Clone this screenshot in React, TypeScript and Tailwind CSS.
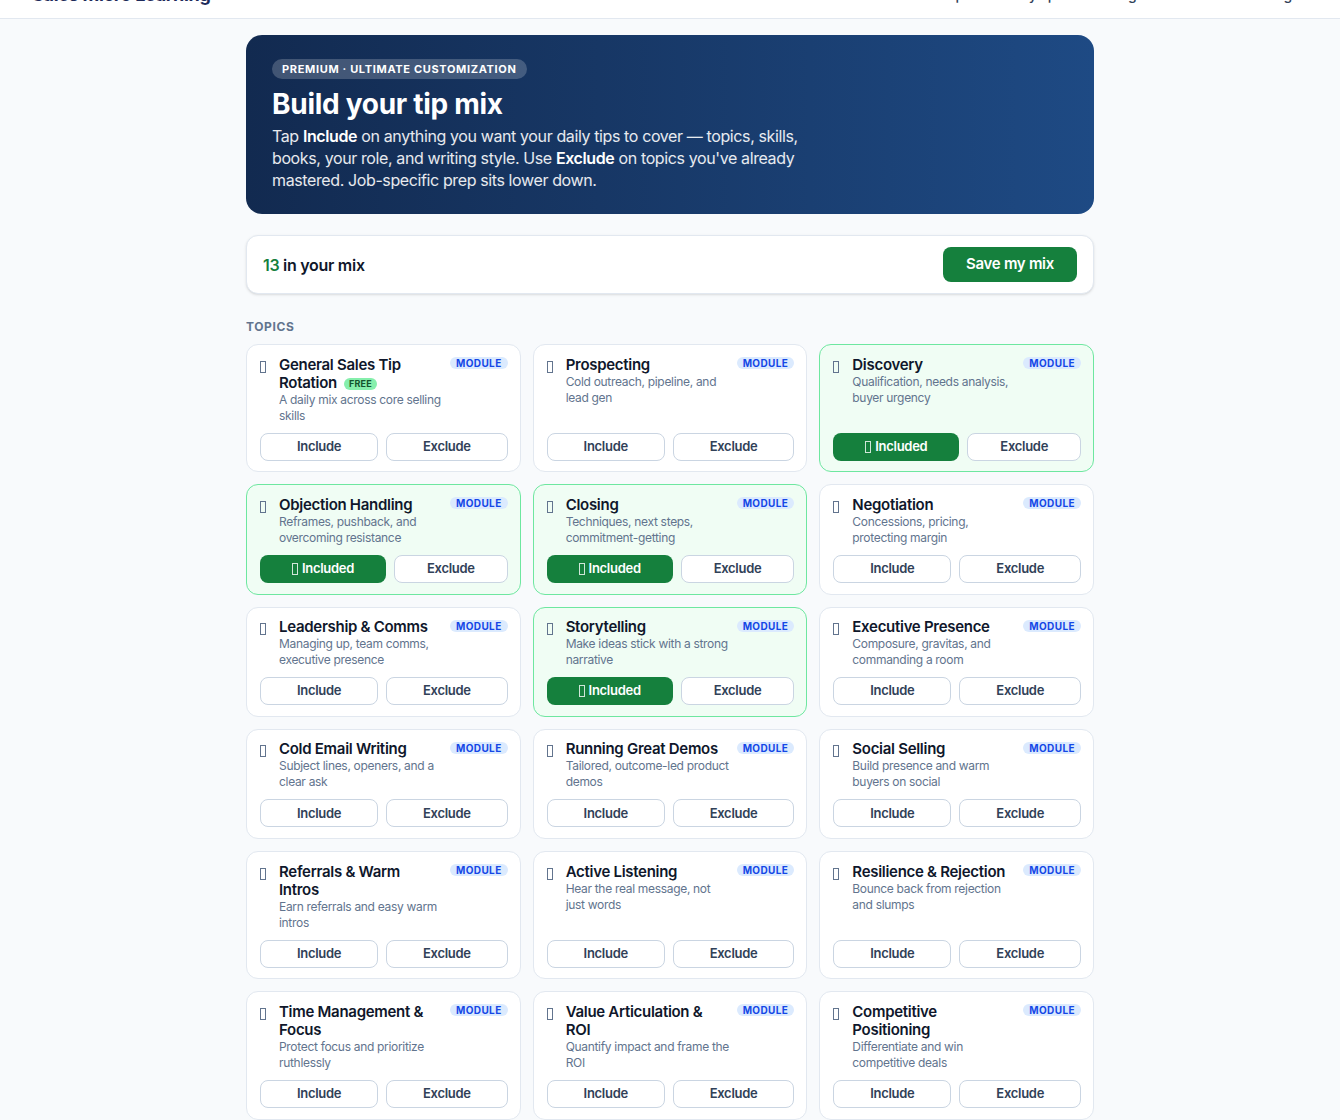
import React, { useState } from "react";

type Topic = {
  id: string;
  title: string;
  desc: string;
  free?: boolean;
};

const TOPICS: Topic[] = [
  { id: "general", title: "General Sales Tip Rotation", desc: "A daily mix across core selling skills", free: true },
  { id: "prospecting", title: "Prospecting", desc: "Cold outreach, pipeline, and lead gen" },
  { id: "discovery", title: "Discovery", desc: "Qualification, needs analysis, buyer urgency" },
  { id: "objections", title: "Objection Handling", desc: "Reframes, pushback, and overcoming resistance" },
  { id: "closing", title: "Closing", desc: "Techniques, next steps, commitment-getting" },
  { id: "negotiation", title: "Negotiation", desc: "Concessions, pricing, protecting margin" },
  { id: "leadership", title: "Leadership & Comms", desc: "Managing up, team comms, executive presence" },
  { id: "storytelling", title: "Storytelling", desc: "Make ideas stick with a strong narrative" },
  { id: "presence", title: "Executive Presence", desc: "Composure, gravitas, and commanding a room" },
  { id: "coldemail", title: "Cold Email Writing", desc: "Subject lines, openers, and a clear ask" },
  { id: "demos", title: "Running Great Demos", desc: "Tailored, outcome-led product demos" },
  { id: "social", title: "Social Selling", desc: "Build presence and warm buyers on social" },
  { id: "referrals", title: "Referrals & Warm Intros", desc: "Earn referrals and easy warm intros" },
  { id: "listening", title: "Active Listening", desc: "Hear the real message, not just words" },
  { id: "resilience", title: "Resilience & Rejection", desc: "Bounce back from rejection and slumps" },
  { id: "time", title: "Time Management & Focus", desc: "Protect focus and prioritize ruthlessly" },
  { id: "roi", title: "Value Articulation & ROI", desc: "Quantify impact and frame the ROI" },
  { id: "competitive", title: "Competitive Positioning", desc: "Differentiate and win competitive deals" },
];

// missing-glyph box, the emoji font isn't there
const Tofu = ({ light }: { light?: boolean }) => (
  <span
    className={`block w-[6px] h-[12px] border ${light ? "border-white/80" : "border-slate-500"}`}
  />
);

const TopicCard = ({
  topic,
  included,
  onToggle,
}: {
  topic: Topic;
  included: boolean;
  onToggle: () => void;
}) => (
  <div
    className={`flex flex-col rounded-xl border pl-[13px] pr-[12px] pt-[10.5px] pb-[10.75px] ${
      included ? "bg-[#f0fdf4] border-[#6ee7a0]" : "bg-white border-slate-200"
    }`}
  >
    <div className="flex items-start">
      <div className="w-[11px] shrink-0 pt-[5px] mr-2">
        <Tofu />
      </div>
      <div className="flex-1 min-w-0 mr-[5px]">
        <h3 className="pr-1 text-[15px] leading-[18px] font-semibold text-slate-900">
          {topic.title}
          {topic.free && (
            <span className="ml-[7px] inline-block align-[1px] rounded-full bg-[#86efac] px-[5px] text-[9px] leading-[12px] font-bold tracking-wide text-[#14532d]">
              FREE
            </span>
          )}
        </h3>
        <p className="text-[12px] leading-[16px] tracking-[-0.026em] text-slate-500">{topic.desc}</p>
      </div>
      <span className="shrink-0 mt-[1.5px] rounded-full bg-blue-100 px-1.5 text-[10px] leading-[12px] font-bold tracking-[0.04em] text-blue-700">
        MODULE
      </span>
    </div>
    <div className="mt-auto flex gap-2 pt-[9px]">
      {included ? (
        <button
          onClick={onToggle}
          className="flex-auto h-7 rounded-lg bg-[#15803d] text-white text-[13px] font-semibold flex items-center justify-center gap-1"
        >
          <Tofu light />
          Included
        </button>
      ) : (
        <button
          onClick={onToggle}
          className="flex-auto h-7 rounded-lg border border-slate-300 bg-white text-[13px] font-semibold text-slate-700"
        >
          Include
        </button>
      )}
      <button className="flex-auto h-7 rounded-lg border border-slate-300 bg-white text-[13px] font-semibold text-slate-700">
        Exclude
      </button>
    </div>
  </div>
);

export default function App() {
  const [included, setIncluded] = useState<string[]>([
    "discovery",
    "objections",
    "closing",
    "storytelling",
  ]);

  const toggle = (id: string) =>
    setIncluded((prev) => (prev.includes(id) ? prev.filter((x) => x !== id) : [...prev, id]));

  return (
    <div className="min-h-screen bg-slate-50 font-['Inter','Noto_Sans',sans-serif] tracking-[-0.018em] text-slate-900">
      {/* Top bar, scrolled mostly out of view */}
      <header className="h-[19px] overflow-hidden border-b border-slate-200 bg-white">
        <div className="-mt-[34px] flex h-[56px] items-center justify-between pl-8 pr-[48px]">
          <span className="text-[18px] font-bold text-[#1e2a5a]">Sales Micro Learning</span>
          <nav className="flex items-center gap-7 text-[14px] font-medium text-slate-700">
            <span>Explore</span>
            <span>My tips</span>
            <span>Settings</span>
            <span>Account</span>
            <span>Billing</span>
          </nav>
        </div>
      </header>

      <main className="mx-auto max-w-[848px] pt-4">
        {/* Hero */}
        <section className="rounded-2xl bg-gradient-to-r from-[#122a50] to-[#1e4a84] px-[26px] pt-[24px] pb-[23px] text-white">
          <div className="flex">
            <span className="rounded-full bg-white/20 px-[10px] py-[3px] text-[11px] leading-[14px] font-bold tracking-[0.06em]">
              PREMIUM · ULTIMATE CUSTOMIZATION
            </span>
          </div>
          <h1 className="mt-[7px] text-[28px] leading-[36px] font-bold">Build your tip mix</h1>
          <p className="mt-[3px] max-w-[540px] text-[16px] leading-[22px] tracking-[-0.024em] text-white/90">
            Tap <b className="font-semibold text-white">Include</b> on anything you want your daily tips to cover —
            topics, skills, books, your role, and writing style. Use{" "}
            <b className="font-semibold text-white">Exclude</b> on topics you've already mastered. Job-specific prep
            sits lower down.
          </p>
        </section>

        {/* Mix summary */}
        <div className="mt-[21px] flex items-center justify-between rounded-xl border border-slate-200 bg-white py-[11px] pl-[16px] pr-[16px] shadow-sm">
          <span className="text-[16px] font-semibold text-slate-900">
            <span className="text-[#15803d]">13</span> in your mix
          </span>
          <button className="h-[35px] rounded-lg bg-[#15803d] px-[23px] text-[15px] font-semibold text-white">
            Save my mix
          </button>
        </div>

        <h2 className="mt-[26px] mb-[10px] text-[12px] leading-[14px] font-bold tracking-wider text-slate-500">
          TOPICS
        </h2>

        <div className="grid grid-cols-3 gap-3">
          {TOPICS.map((t) => (
            <TopicCard key={t.id} topic={t} included={included.includes(t.id)} onToggle={() => toggle(t.id)} />
          ))}
        </div>
      </main>
    </div>
  );
}
